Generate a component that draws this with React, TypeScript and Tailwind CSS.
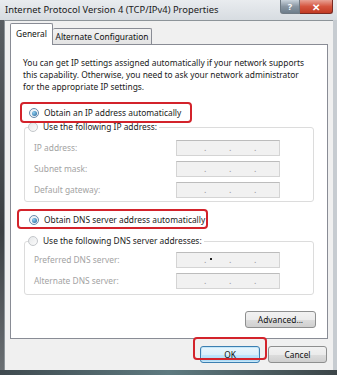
import React from 'react'

const FONT = { fontFamily: '"Noto Sans", "Open Sans", Arial, sans-serif' }

function Radio({ checked }: { checked?: boolean }) {
  return checked ? (
    <span className="flex h-[10px] w-[10px] shrink-0 items-center justify-center rounded-full border border-[#6b8bab] bg-[#eef3f8]">
      <span className="h-[5px] w-[5px] rounded-full bg-[radial-gradient(circle_at_35%_35%,#8fd0f2,#1f5c93)]" />
    </span>
  ) : (
    <span className="h-[10px] w-[10px] shrink-0 rounded-full border border-[#c4c7cb] bg-[linear-gradient(135deg,#e6e8ea,#fbfbfb)]" />
  )
}

function IpBox({ cursor }: { cursor?: boolean }) {
  return (
    <div className="flex h-[16px] w-[104px] items-center border border-[#d4d4d4] border-t-[#bcbcbc] bg-[#f1f1f1] text-[9px] leading-none text-[#9a9a9a]">
      <span className="w-[27px]" />
      <span className="relative w-[25px]">
        {cursor && <span className="absolute left-[6px] top-[3px] h-[2px] w-[2px] bg-[#222]" />}.
      </span>
      <span className="w-[25px]">.</span>
      <span>.</span>
    </div>
  )
}

function Row({ label, cursor }: { label: string; cursor?: boolean }) {
  return (
    <div className="flex h-[21px] items-center">
      <span className="w-[151px] pl-[9px] text-[#a3a3a3]">{label}</span>
      <IpBox cursor={cursor} />
    </div>
  )
}

function Group({
  legend,
  rows,
  top,
  bottom,
}: {
  legend: string
  rows: { label: string; cursor?: boolean }[]
  top: string
  bottom: string
}) {
  return (
    <fieldset className={`mx-[13px] rounded-[3px] border border-[#dcdcdc] ${bottom}`}>
      <legend className="ml-[3px] flex h-[12px] items-center gap-[5px] pr-[2px]">
        <Radio />
        <span className="text-[#222]">{legend}</span>
      </legend>
      <div className={top}>
        {rows.map(r => (
          <Row key={r.label} label={r.label} cursor={r.cursor} />
        ))}
      </div>
    </fieldset>
  )
}

function Button({ children, focused, w }: { children: React.ReactNode; focused?: boolean; w: string }) {
  return (
    <div
      className={`flex h-[17px] ${w} items-center justify-center rounded-[3px] border text-[#111] ${
        focused
          ? 'border-[#3c7fb1] bg-[linear-gradient(#eaf6fd,#d9f0fc_50%,#bee6fd_51%,#a7d9f5)] shadow-[inset_0_0_0_1px_#c5e6f8]'
          : 'border-[#8e8f8f] bg-[linear-gradient(#f2f2f2,#ebebeb_50%,#dddddd_51%,#cfcfcf)]'
      }`}
    >
      {children}
    </div>
  )
}

export default function App() {
  return (
    <div className="relative flex h-[375px] w-[337px] flex-col overflow-hidden bg-[#b9c0c7] text-[8.4px] leading-[12px]" style={FONT}>
      {/* title bar */}
      <div className="flex h-[20px] shrink-0 items-start justify-between bg-[linear-gradient(#e9ecef,#d7dce1)] pl-[5px] pr-[4px]">
        <span className="mt-[4px] whitespace-nowrap text-[9.4px] leading-[12px] text-[#1a1a1a]">
          Internet Protocol Version 4 (TCP/IPv4) Properties
        </span>
        <div className="flex">
          <div className="flex h-[14px] w-[20px] items-center justify-center rounded-bl-[3px] border border-t-0 border-[#6f7a84] bg-[linear-gradient(#c9d3dc,#8996a2_50%,#6d7d8b)] text-[9px] font-bold text-white">
            ?
          </div>
          <div className="flex h-[14px] w-[33px] items-center justify-center rounded-br-[3px] border border-l-0 border-t-0 border-[#7a2a22] bg-[linear-gradient(#e8a295,#d5553f_50%,#c13a23)] text-[10px] font-bold text-white">
            ✕
          </div>
        </div>
      </div>

      <div className="flex min-h-0 flex-1">
        <div className="w-[4px] bg-[linear-gradient(#5a5f63,#3b3f42_60%,#6a6f73)]" />
        {/* client area */}
        <div className="flex flex-1 flex-col border-l border-t border-[#8d9499] bg-[#f0f0f0] pl-[5px] pr-[5px] pt-[2px]">
          {/* tabs */}
          <div className="flex items-end">
            <div className="relative z-10 -mb-[1px] flex h-[22px] w-[43px] items-start justify-center rounded-t-[2px] border border-b-0 border-[#898c95] bg-white pt-[4px] text-[#111]">
              General
            </div>
            <div className="flex h-[16px] w-[99px] items-center justify-center whitespace-nowrap rounded-t-[2px] border border-b-0 border-l-0 border-[#898c95] bg-[linear-gradient(#f2f2f2,#e3e3e3)] text-[#111]">
              Alternate Configuration
            </div>
          </div>
          {/* panel */}
          <div className="flex h-[295px] flex-col border border-[#898c95] bg-white pt-[12px] text-[#1a1a1a]">
            <div className="pl-[12px]">
              <div className="whitespace-nowrap">You can get IP settings assigned automatically if your network supports</div>
              <div className="whitespace-nowrap">this capability. Otherwise, you need to ask your network administrator</div>
              <div className="whitespace-nowrap">for the appropriate IP settings.</div>
            </div>

            <div className="ml-[18px] mt-[13px] flex h-[14px] items-center gap-[5px]">
              <Radio checked />
              <span>Obtain an IP address automatically</span>
            </div>

            <div className="mt-[1px]">
              <Group
                legend="Use the following IP address:"
                rows={[{ label: 'IP address:' }, { label: 'Subnet mask:' }, { label: 'Default gateway:' }]}
                top="mt-[4px]"
                bottom="pb-[1px]"
              />
            </div>

            <div className="ml-[18px] mt-[11px] flex h-[14px] items-center gap-[5px]">
              <Radio checked />
              <span>Obtain DNS server address automatically</span>
            </div>

            <div className="mt-[8px]">
              <Group
                legend="Use the following DNS server addresses:"
                rows={[{ label: 'Preferred DNS server:', cursor: true }, { label: 'Alternate DNS server:' }]}
                top="mt-[2px]"
                bottom="pb-[3px]"
              />
            </div>

            <div className="mt-[16px] flex justify-end pr-[11px]">
              <Button w="w-[71px]">Advanced...</Button>
            </div>
          </div>

          {/* dialog buttons */}
          <div className="mt-[7px] flex justify-end gap-[8px] pr-[1px]">
            <Button w="w-[60px]" focused>
              OK
            </Button>
            <Button w="w-[59px]">Cancel</Button>
          </div>
        </div>
        <div className="w-[4px] bg-[#c7ccd1]" />
      </div>
      <div className="h-[5px] shrink-0 bg-[linear-gradient(90deg,#3f4a4f,#5e7a80_50%,#3c4548)]" />

      {/* red annotation boxes */}
      <div className="pointer-events-none absolute left-[20px] top-[102px] h-[21px] w-[172px] rounded-[4px] border-2 border-[#d3232b]" />
      <div className="pointer-events-none absolute left-[17px] top-[209px] h-[20px] w-[191px] rounded-[4px] border-2 border-[#d3232b]" />
      <div className="pointer-events-none absolute left-[193px] top-[337px] h-[23px] w-[74px] rounded-[4px] border-2 border-[#d3232b]" />
    </div>
  )
}
